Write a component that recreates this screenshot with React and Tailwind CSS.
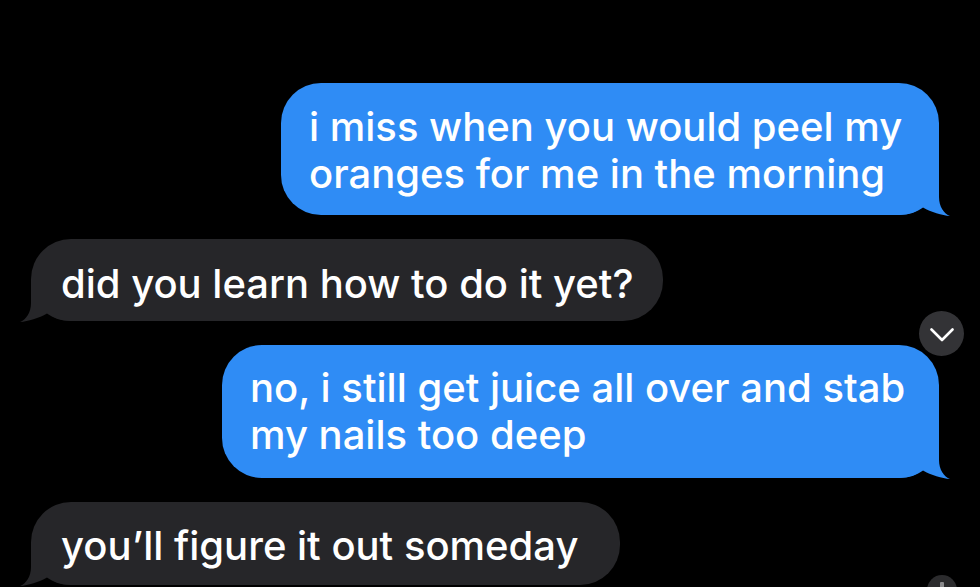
import React from "react";

const BLUE = "#2f8cf5";
const GRAY = "#262629";

function Tail({ color, side }) {
  const pos = side === "right" ? "right-[-12px]" : "left-[-12px] -scale-x-100";
  return (
    <svg
      className={`absolute bottom-[-2px] ${pos}`}
      width="52"
      height="42"
      viewBox="-40 -40 52 42"
    >
      <path
        d="M 0 -40 L 0 -18 C 0 -8, 5 -1.5, 11 1 C 3 0.5, -8 -3, -16 -7.5 C -22 -3, -30 0, -40 0 L -40 -40 Z"
        fill={color}
      />
    </svg>
  );
}

function Bubble({ side, className, children }) {
  const color = side === "right" ? BLUE : GRAY;
  const bg = side === "right" ? "bg-[#2f8cf5]" : "bg-[#262629]";
  return (
    <div
      className={`relative ${bg} rounded-[40px] text-white text-[40px] font-medium leading-[47px] tracking-[0px] whitespace-nowrap ${className}`}
    >
      <Tail color={color} side={side} />
      <div className="relative">{children}</div>
    </div>
  );
}

export default function App() {
  return (
    <div
      className="relative w-[980px] h-[587px] bg-black overflow-hidden flex flex-col"
      style={{ fontFamily: 'Inter, "Liberation Sans", Arial, sans-serif' }}
    >
      <Bubble
        side="right"
        className="self-end mr-[41px] mt-[83px] w-[658px] h-[132px] pt-[20px] pl-[28px]"
      >
        <div>i miss when you would peel my</div>
        <div>oranges for me in the morning</div>
      </Bubble>

      <Bubble
        side="left"
        className="self-start ml-[31px] mt-[24px] w-[632px] h-[82px] pt-[21px] pl-[30px]"
      >
        <div>did you learn how to do it yet?</div>
      </Bubble>

      <Bubble
        side="right"
        className="self-end mr-[41px] mt-[24px] w-[717px] h-[133px] pt-[19px] pl-[28px]"
      >
        <div>no, i still get juice all over and stab</div>
        <div>my nails too deep</div>
      </Bubble>

      <Bubble
        side="left"
        className="self-start ml-[31px] mt-[24px] w-[589px] h-[83px] pt-[20px] pl-[30px]"
      >
        <div>you’ll figure it out someday</div>
      </Bubble>

      {/* scroll-down chevron button */}
      <div className="absolute left-[919px] top-[311px] w-[45px] h-[45px] rounded-full bg-[#333336] flex items-center justify-center">
        <svg width="24" height="14" viewBox="0 0 24 14" className="mt-[3px]">
          <path
            d="M 1.5 1.5 L 12 12 L 22.5 1.5"
            fill="none"
            stroke="white"
            strokeWidth="2.6"
            strokeLinecap="round"
            strokeLinejoin="round"
          />
        </svg>
      </div>

      {/* partially visible circle at bottom right */}
      <div className="absolute left-[927px] top-[575px] w-[30px] h-[30px] rounded-full bg-[#2b2b2d] flex justify-center">
        <div className="mt-[7px] w-[4px] h-[8px] bg-[#8a8a8c] rounded-[1px]" />
      </div>
    </div>
  );
}
